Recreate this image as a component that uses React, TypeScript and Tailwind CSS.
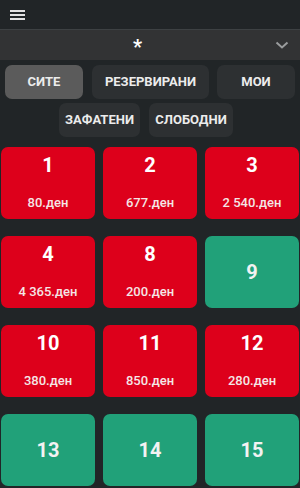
import React from "react";

type Tile = { n: string; price?: string };

const tiles: Tile[] = [
  { n: "1", price: "80.ден" },
  { n: "2", price: "677.ден" },
  { n: "3", price: "2 540.ден" },
  { n: "4", price: "4 365.ден" },
  { n: "8", price: "200.ден" },
  { n: "9" },
  { n: "10", price: "380.ден" },
  { n: "11", price: "850.ден" },
  { n: "12", price: "280.ден" },
  { n: "13" },
  { n: "14" },
  { n: "15" },
];

export default function App() {
  return (
    <div
      className="w-[300px] h-[488px] overflow-hidden bg-[#212527] text-white"
      style={{ fontFamily: "Roboto, 'Noto Sans', sans-serif" }}
    >
      {/* header */}
      <div className="h-[29px] flex items-center pl-[10px]">
        <div className="flex flex-col gap-[2px] w-[15px]">
          <div className="h-[2px] bg-[#e2e2e2]" />
          <div className="h-[2px] bg-[#e2e2e2]" />
          <div className="h-[2px] bg-[#e2e2e2]" />
        </div>
      </div>
      {/* dropdown */}
      <div className="h-[31px] border-t border-[#3d4143] bg-[#323334] flex items-center">
        <div className="flex-1 flex justify-center pt-[4px]">
          <span className="text-[20px] font-bold text-white leading-none">*</span>
        </div>
        <svg width="14" height="8" viewBox="0 0 14 8" className="mr-[11px]">
          <path d="M1.5 1.5 L7 6.5 L12.5 1.5" fill="none" stroke="#9a9c9d" strokeWidth="2" />
        </svg>
      </div>
      {/* filter buttons */}
      <div className="pt-[5px] flex flex-col gap-[4px]">
        <div className="flex gap-[8px] pl-[5px]">
          <button className="w-[78px] h-[34px] rounded-[7px] bg-[#5b5b5b] text-[13px] font-bold text-[#ececec]">СИТЕ</button>
          <button className="ml-[1px] w-[117px] h-[34px] rounded-[7px] bg-[#2d3032] text-[13px] font-bold text-[#ececec]">РЕЗЕРВИРАНИ</button>
          <button className="w-[78px] h-[34px] rounded-[7px] bg-[#2d3032] text-[13px] font-bold text-[#ececec]">МОИ</button>
        </div>
        <div className="flex gap-[9px] pl-[59px]">
          <button className="w-[81px] h-[34px] rounded-[7px] bg-[#2d3032] text-[13px] font-bold text-[#ececec]">ЗАФАТЕНИ</button>
          <button className="w-[84px] h-[34px] rounded-[7px] bg-[#2d3032] text-[13px] font-bold text-[#ececec]">СЛОБОДНИ</button>
        </div>
      </div>
      {/* tiles */}
      <div className="mt-[10px] px-[1px] grid grid-cols-3 gap-x-[8px] gap-y-[17px]">
        {tiles.map((t) => (
          <div
            key={t.n}
            className={
              t.price
                ? "h-[72px] rounded-[7px] bg-[#dd001b] flex flex-col items-center"
                : "h-[72px] rounded-[7px] bg-[#21a179] flex flex-col items-center justify-center"
            }
          >
            {t.price ? (
              <>
                <span className="mt-[6px] text-[20px] font-bold leading-[24px]">{t.n}</span>
                <span className="mt-[18px] text-[13px] font-medium leading-[16px] text-[#f4e6e6]">{t.price}</span>
              </>
            ) : (
              <span className="text-[20px] font-bold leading-[24px] text-[#f2f2f2]">{t.n}</span>
            )}
          </div>
        ))}
      </div>
    </div>
  );
}
